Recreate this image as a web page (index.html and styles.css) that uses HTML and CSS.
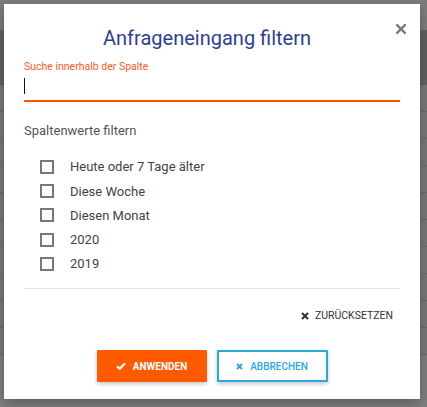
FILE: index.html
```html
<!DOCTYPE html>
<html lang="de">
<head>
<meta charset="utf-8">
<title>Anfrageneingang filtern</title>
<link rel="stylesheet" href="styles.css">
</head>
<body>
<div class="page">
  <div class="topbar"></div>
  <div class="thead"></div>
  <div class="trow"></div>
  <div class="trow"></div>
  <div class="trow"></div>
  <div class="trow"></div>
  <div class="trow"></div>
  <div class="trow"></div>
  <div class="trow"></div>
  <div class="trow"></div>
  <div class="trow"></div>
  <div class="trow"></div>
</div>
<div class="overlay"></div>

<div class="dialog">
  <button class="close" aria-label="Schließen">
    <svg width="10" height="10" viewBox="0 0 10 10"><path d="M1 1L9 9M9 1L1 9" stroke="#7a7a7a" stroke-width="2.4" stroke-linecap="square"/></svg>
  </button>
  <h1 class="title">Anfrageneingang filtern</h1>
  <label class="field-label">Suche innerhalb der Spalte</label>
  <div class="field"><span class="caret"></span></div>
  <div class="section">Spaltenwerte filtern</div>
  <ul class="options">
    <li class="option"><span class="box"></span><span>Heute oder 7 Tage älter</span></li>
    <li class="option"><span class="box"></span><span>Diese Woche</span></li>
    <li class="option"><span class="box"></span><span>Diesen Monat</span></li>
    <li class="option"><span class="box"></span><span>2020</span></li>
    <li class="option"><span class="box"></span><span>2019</span></li>
  </ul>
  <div class="divider"></div>
  <div class="reset-row">
    <button class="reset">
      <svg width="8" height="8" viewBox="0 0 8 8"><path d="M1 1L7 7M7 1L1 7" stroke="#333" stroke-width="2.1"/></svg>
      <span>ZURÜCKSETZEN</span>
    </button>
  </div>
  <div class="actions">
    <button class="btn btn-apply">
      <svg width="10" height="8" viewBox="0 0 10 8"><path d="M1 4.2L3.7 6.8L9 1.2" fill="none" stroke="#fff" stroke-width="2.2"/></svg>
      <span>ANWENDEN</span>
    </button>
    <button class="btn btn-cancel">
      <svg width="7" height="7" viewBox="0 0 7 7"><path d="M1 1L6 6M6 1L1 6" stroke="#2aa7dd" stroke-width="1.9"/></svg>
      <span>ABBRECHEN</span>
    </button>
  </div>
</div>
</body>
</html>
```

FILE: styles.css
```css
* { box-sizing: border-box; }

html, body {
  margin: 0;
  padding: 0;
  width: 427px;
  height: 407px;
  overflow: hidden;
  font-family: Roboto, "Noto Sans", Arial, sans-serif;
}

.page {
  display: flex;
  flex-direction: column;
  background: #ffffff;
  height: 407px;
}

.topbar {
  height: 30px;
  background: #fafafa;
  flex: none;
}

.thead {
  height: 55px;
  flex: none;
  background: #c2c2c2;
}

.trow {
  height: 27px;
  flex: none;
  border-bottom: 1px solid #d6d6d6;
  background: #f2f2f2;
}

.overlay {
  position: absolute;
  inset: 0;
  background: rgba(0, 0, 0, 0.5);
}

.dialog {
  position: absolute;
  left: 4px;
  top: 4px;
  width: 416px;
  height: 395px;
  background: #ffffff;
  box-shadow: 0 4px 12px rgba(0, 0, 0, 0.3);
  padding: 22px 20px 17px 20px;
  display: flex;
  flex-direction: column;
}

.close {
  position: absolute;
  left: 392px;
  top: 20px;
  width: 10px;
  height: 10px;
  padding: 0;
  border: 0;
  background: none;
  display: flex;
}

.title {
  margin: 0;
  padding-right: 10px;
  font-size: 20px;
  line-height: 24px;
  font-weight: 400;
  color: #2f3e96;
  text-align: center;
}

.field-label {
  margin-top: 10px;
  font-size: 10.5px;
  line-height: 14px;
  color: #ff5a1f;
}

.field {
  height: 28px;
  border-bottom: 2px solid #ff5500;
  padding-top: 4px;
}

.caret {
  display: block;
  width: 1px;
  height: 16px;
  background: #111;
}

.section {
  margin-top: 20px;
  font-size: 13px;
  line-height: 18px;
  color: #555;
}

.options {
  list-style: none;
  margin: 15px 0 0 0;
  padding: 0 0 0 16px;
}

.option {
  height: 24.25px;
  display: flex;
  align-items: center;
  gap: 16px;
  font-size: 13px;
  color: #444;
}

.box {
  width: 14px;
  height: 14px;
  border: 2px solid #777;
  flex: none;
}

.divider {
  margin-top: 12px;
  height: 1px;
  background: #e2e2e2;
}

.reset-row {
  margin-top: 20px;
  display: flex;
  justify-content: flex-end;
  padding-right: 7px;
}

.reset {
  border: 0;
  background: none;
  padding: 0;
  display: flex;
  align-items: center;
  gap: 6px;
  font-family: inherit;
  font-size: 10.5px;
  line-height: 14px;
  color: #333;
}

.actions {
  margin-top: 27px;
  display: flex;
  justify-content: center;
  gap: 10px;
}

.btn {
  height: 32px;
  display: flex;
  align-items: center;
  justify-content: center;
  gap: 7px;
  font-family: inherit;
  font-size: 10px;
  font-weight: 700;
  border-radius: 1px;
  box-shadow: 0 2px 4px rgba(0, 0, 0, 0.22);
  padding: 0;
}

.btn-apply {
  width: 110px;
  background: #ff5a00;
  border: 0;
  color: #fff;
}

.btn-cancel {
  width: 111px;
  background: #fff;
  border: 2px solid #2aa7dd;
  color: #2aa7dd;
  font-weight: 500;
}
```
